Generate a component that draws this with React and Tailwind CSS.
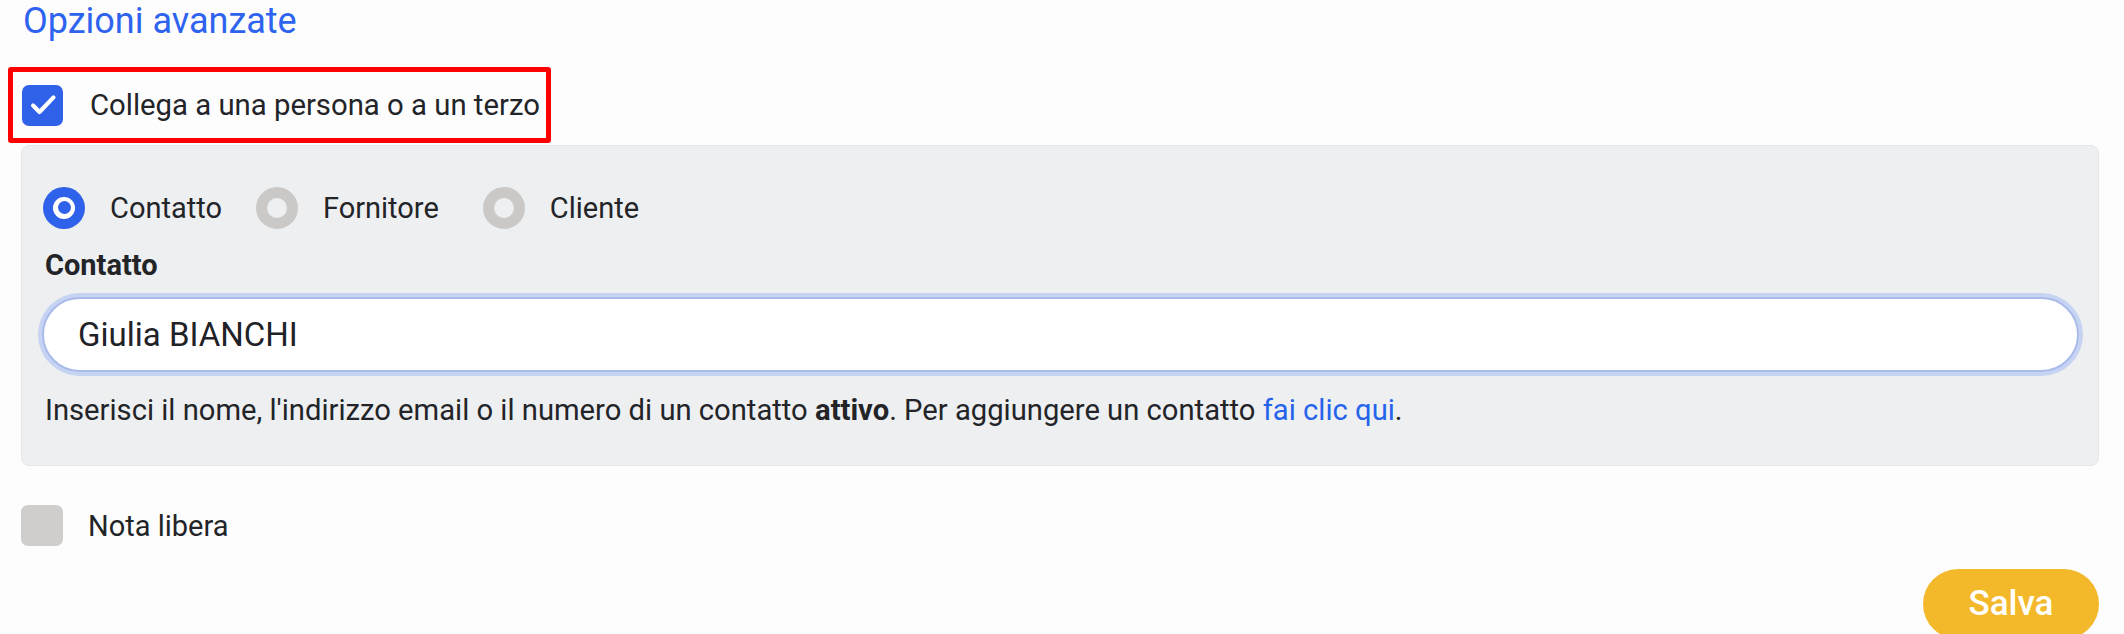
import React, { useState } from "react";

const Radio = ({ checked }) =>
  checked ? (
    <span className="w-[42px] h-[42px] rounded-full bg-[#2f62ea] flex items-center justify-center shrink-0">
      <span className="w-[22px] h-[22px] rounded-full bg-white flex items-center justify-center">
        <span className="w-[13px] h-[13px] rounded-full bg-[#2f62ea]" />
      </span>
    </span>
  ) : (
    <span className="w-[42px] h-[42px] rounded-full border-[11px] border-[#cac9c7] shrink-0" />
  );

const App = () => {
  const [linked, setLinked] = useState(true);
  const [kind, setKind] = useState("Contatto");
  const [contact, setContact] = useState("Giulia BIANCHI");

  const options = [
    { label: "Contatto", gap: "mr-[34px]" },
    { label: "Fornitore", gap: "mr-[44px]" },
    { label: "Cliente", gap: "" },
  ];

  return (
    <div
      className="w-full h-[634px] overflow-hidden bg-[#fdfdfd] text-[#222428] pl-[21px] pr-[25px]"
      style={{ fontFamily: "Roboto, 'Noto Sans', sans-serif" }}
    >
      {/* Title */}
      <h2 className="ml-[2px] text-[36px] leading-[42px] text-[#2d63ee]">
        Opzioni avanzate
      </h2>

      {/* Highlighted checkbox row */}
      <div
        className="mt-[25px] ml-[-13px] w-fit h-[76px] flex items-center border-[5px] border-[#ff0000] rounded-[3px] pl-[9px] pr-[6px] cursor-pointer"
        onClick={() => setLinked(!linked)}
      >
        <span
          className={`w-[41px] h-[41px] rounded-[7px] flex items-center justify-center ${
            linked ? "bg-[#3061e9]" : "bg-[#cfcecc]"
          }`}
        >
          {linked && (
            <svg width="28" height="28" viewBox="0 0 24 24" fill="none">
              <path
                d="M3.5 12.5L9 18L21 5.5"
                stroke="white"
                strokeWidth="3.6"
                strokeLinecap="round"
                strokeLinejoin="round"
              />
            </svg>
          )}
        </span>
        <span className="ml-[27px] text-[29.3px] leading-[34px]">
          Collega a una persona o a un terzo
        </span>
      </div>

      {/* Panel */}
      <div className="mt-[2px] h-[321px] rounded-[8px] bg-[#eeeff1] border border-[#e6e7e9] px-[21px] pt-[41px]">
        <div className="flex items-center h-[41px]">
          {options.map((o) => (
            <label
              key={o.label}
              className={`flex items-center cursor-pointer ${o.gap}`}
              onClick={() => setKind(o.label)}
            >
              <Radio checked={kind === o.label} />
              <span className="ml-[25px] text-[29px] leading-[34px]">{o.label}</span>
            </label>
          ))}
        </div>

        <div className="mt-[21px] ml-[2px] text-[29px] leading-[32px] font-bold">Contatto</div>

        <div className="mt-[16px] ml-[-1px] mr-[-2px] h-[75px] rounded-full bg-white border-2 border-[#a9bbea] ring-4 ring-[#c7d3f3] flex items-center px-[34px]">
          <input
            className="w-full bg-transparent outline-none text-[33px] text-[#1f2226]"
            value={contact}
            onChange={(e) => setContact(e.target.value)}
          />
        </div>

        <p className="mt-[20px] ml-[2px] text-[29.2px] leading-[36px]">
          Inserisci il nome, l'indirizzo email o il numero di un contatto{" "}
          <b className="font-bold">attivo</b>. Per aggiungere un contatto{" "}
          <a className="text-[#2563eb] cursor-pointer">fai clic qui</a>.
        </p>
      </div>

      {/* Nota libera */}
      <div className="mt-[39px] flex items-center h-[41px]">
        <span className="w-[42px] h-[41px] rounded-[7px] bg-[#cfcecc]" />
        <span className="ml-[25px] text-[29px] leading-[34px]">Nota libera</span>
      </div>

      {/* Save */}
      <div className="mt-[23px] flex justify-end">
        <button className="w-[176px] h-[70px] rounded-full bg-[#f4b82b] text-white text-[35px] font-medium">
          Salva
        </button>
      </div>
    </div>
  );
};

export default App;
